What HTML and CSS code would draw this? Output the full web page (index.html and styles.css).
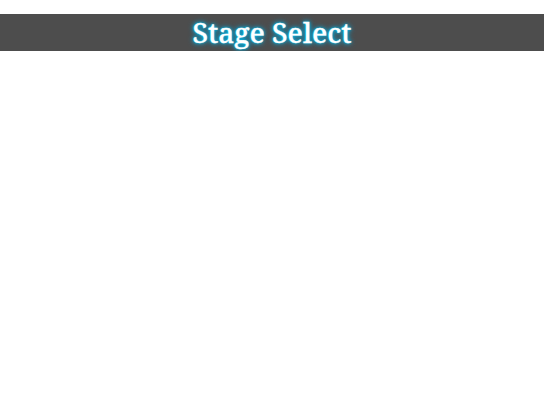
FILE: index.html
```html
<!DOCTYPE html>
<html>
<head>
<meta charset="utf-8">
<link rel="stylesheet" href="styles.css">
</head>
<body>
<header class="title-bar">
  <h1 class="title">Stage Select</h1>
</header>
</body>
</html>
```

FILE: styles.css
```css
html, body {
  margin: 0;
  padding: 0;
  background: #ffffff;
}
.title-bar {
  margin-top: 14px;
  height: 37px;
  background: #4d4d4d;
  display: flex;
  align-items: center;
  justify-content: center;
}
.title {
  margin: 0;
  font-family: "Noto Serif", "Liberation Serif", serif;
  font-weight: 500;
  font-size: 28px;
  line-height: 37px;
  color: #ffffff;
  -webkit-text-stroke: 0.3px #ffffff;
  text-shadow: 0 0 2px #00d0ff, 0 0 4px #00b8ee, 0 0 6px #0099cc;
}
```
